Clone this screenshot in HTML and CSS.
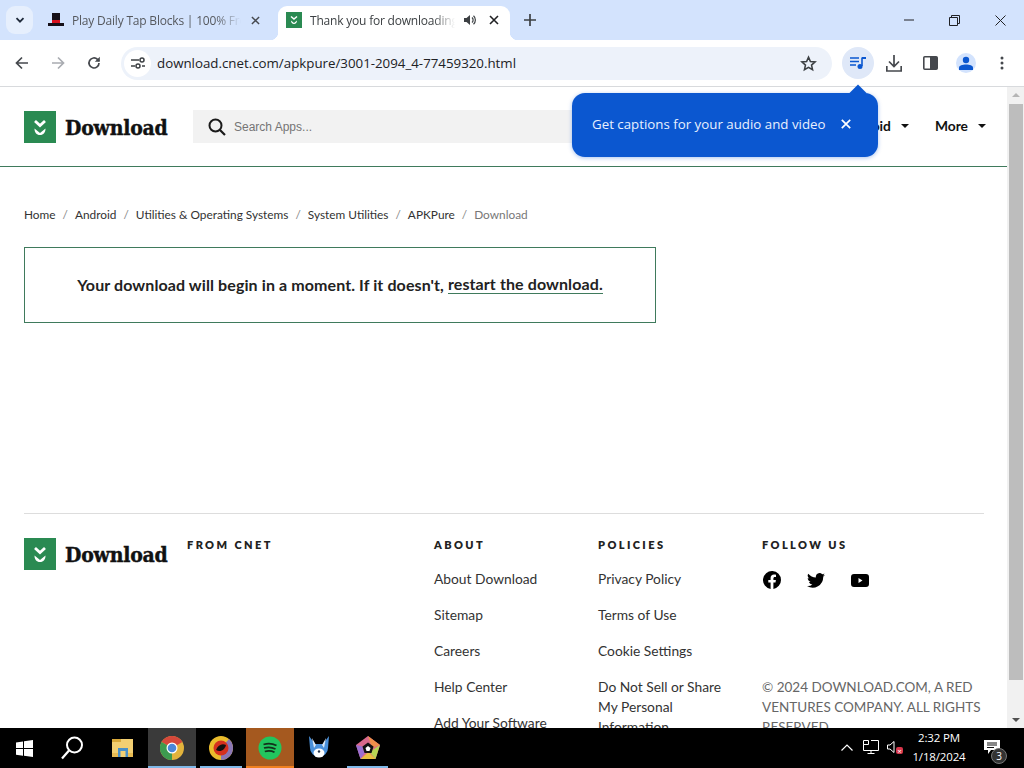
FILE: index.html
```html
<!DOCTYPE html>
<html lang="en">
<head>
<meta charset="utf-8">
<title>Thank you for downloading</title>
<link rel="stylesheet" href="styles.css">
</head>
<body>
<div class="screen">
  <div class="tabstrip">
    <div class="tab-search"><svg width="12" height="12" viewBox="0 0 12 12"><path d="M2.500 4.200 6 7.700l3.500-3.500" fill="none" stroke="#1f2a3a" stroke-width="1.800"/></svg></div>
    <div class="tab">
      <svg class="favicon" width="16" height="16" viewBox="0 0 16 16"><rect x="4" y="1" width="8" height="8" fill="#161018"/><rect x="4" y="8" width="8" height="3" fill="#d8121e"/><rect x="0" y="11" width="16" height="3" fill="#161018"/></svg>
      <span class="tab-title">Play Daily Tap Blocks | 100% Free</span>
      <svg class="tab-close" width="9" height="9" viewBox="0 0 10 10"><path d="M1 1l8 8M9 1l-8 8" stroke="#46494f" stroke-width="1.600"/></svg>
    </div>
    <div class="tab active">
      <svg class="favicon" width="16" height="16" viewBox="0 0 16 16"><rect width="16" height="16" fill="#2a8a52"/><path d="M5 4.500 8 7l3-2.500" fill="none" stroke="#fff" stroke-width="1.500"/><path d="M5 8.500 8 11l3-2.500c0 2-1.200 3.500-3 3.500s-3-1.500-3-3.500z" fill="#fff"/></svg>
      <span class="tab-title">Thank you for downloading</span>
      <svg class="tab-audio" width="14" height="14" viewBox="0 0 14 14"><path d="M1 5h2.500L7 2v10L3.500 9H1z" fill="#3c4043"/><path d="M9 4.500c1.500 1.300 1.500 3.700 0 5M10.500 2.800c2.500 2.200 2.500 6.200 0 8.400" fill="none" stroke="#3c4043" stroke-width="1.200"/></svg>
      <svg class="tab-close" width="10" height="10" viewBox="0 0 10 10"><path d="M1 1l8 8M9 1l-8 8" stroke="#202124" stroke-width="1.600"/></svg>
    </div>
    <svg class="new-tab" width="12" height="12" viewBox="0 0 12 12"><path d="M6 0v12M0 6h12" stroke="#3c4043" stroke-width="1.700"/></svg>
    <div class="window-controls">
      <svg width="10" height="10" viewBox="0 0 10 10"><path d="M0 5h10" stroke="#202124"/></svg>
      <svg width="11" height="11" viewBox="0 0 11 11"><path d="M.5 2.500h8v8h-8zM2.500 2.500v-2h8v8h-2" fill="none" stroke="#202124"/></svg>
      <svg width="11" height="11" viewBox="0 0 11 11"><path d="M.5.5l10 10M10.500.5l-10 10" stroke="#202124"/></svg>
    </div>
  </div>
  <div class="toolbar">
    <svg class="nav" width="14" height="14" viewBox="0 0 14 14"><path d="M13 7H2M7 1.500 1.500 7 7 12.500" fill="none" stroke="#45484d" stroke-width="1.700"/></svg>
    <svg class="nav" width="14" height="14" viewBox="0 0 14 14"><path d="M1 7h11M7 1.500 12.500 7 7 12.500" fill="none" stroke="#a9acb1" stroke-width="1.700"/></svg>
    <svg class="nav" width="14" height="14" viewBox="0 0 14 14"><path d="M12 7a5 5 0 1 1-1.500-3.600L12 5" fill="none" stroke="#45484d" stroke-width="1.700"/><path d="M12.800 .8v5h-5z" fill="#45484d"/></svg>
    <div class="omnibox">
      <div class="site-info"><svg width="14" height="12" viewBox="0 0 14 12"><path d="M0 3h8M0 9h4M11 9h3" stroke="#3c4043" stroke-width="1.600"/><circle cx="11" cy="3" r="2" fill="none" stroke="#3c4043" stroke-width="1.500"/><circle cx="7" cy="9" r="2" fill="none" stroke="#3c4043" stroke-width="1.500"/></svg></div>
      <span class="url">download.cnet.com/apkpure/3001-2094_4-77459320.html</span>
      <svg class="star" width="17" height="17" viewBox="0 0 24 24"><path d="m12 3 2.700 6.100 6.600.7-5 4.400 1.400 6.500L12 17.400l-5.700 3.300 1.400-6.500-5-4.400 6.600-.7z" fill="none" stroke="#3c4043" stroke-width="2.200"/></svg>
    </div>
    <div class="media-btn"><svg width="16" height="14" viewBox="0 0 16 14"><path d="M0 2h9M0 5.500h9M0 9h6" stroke="#0b57d0" stroke-width="1.600"/><path d="M12 1.500V10" stroke="#0b57d0" stroke-width="1.600"/><path d="M12 1h4v2h-4z" fill="#0b57d0"/><circle cx="10" cy="10.500" r="2.500" fill="#0b57d0"/></svg></div>
    <div class="tool-icons">
      <div class="tool"><svg width="16" height="17" viewBox="0 0 16 17"><path d="M8 0v11M3 6.500l5 5 5-5M.8 11v5h14.400v-5" fill="none" stroke="#45484d" stroke-width="1.700"/></svg></div>
      <div class="tool"><svg width="15" height="14" viewBox="0 0 15 14"><rect x=".8" y=".8" width="13.400" height="12.400" rx="1" fill="none" stroke="#45484d" stroke-width="1.600"/><rect x="7" y="1" width="7" height="12" fill="#45484d"/></svg></div>
      <div class="tool"><div class="avatar"><svg width="14" height="14" viewBox="0 0 14 14"><circle cx="7" cy="4" r="3.200" fill="#0b57d0"/><path d="M0 14v-2.500C0 9.500 3.500 8.500 7 8.500s7 1 7 3V14z" fill="#0b57d0"/></svg></div></div>
      <div class="tool"><svg width="4" height="14" viewBox="0 0 4 14"><circle cx="2" cy="2" r="1.500" fill="#45484d"/><circle cx="2" cy="7" r="1.500" fill="#45484d"/><circle cx="2" cy="12" r="1.500" fill="#45484d"/></svg></div>
    </div>
  </div>
  <div class="viewport">
    <div class="page">
      <header class="site-header">
        <a class="logo">
          <svg class="logo-mark" width="32" height="32" viewBox="0 0 32 32"><rect width="32" height="32" fill="#2a8a52"/><path d="m11 10 5 4.500 5-4.500" fill="none" stroke="#fff" stroke-width="2.800"/><path d="M10.500 17.500 16 22l5.500-4.500c0 4-2 6.500-5.500 6.500s-5.500-2.500-5.500-6.500z" fill="#fff"/></svg>
          <span class="logo-text">Download</span>
        </a>
        <div class="search">
          <svg width="18" height="18" viewBox="0 0 18 18"><circle cx="7.500" cy="7.500" r="6" fill="none" stroke="#1a1a1a" stroke-width="2"/><path d="m12 12 5 5" stroke="#1a1a1a" stroke-width="2.200"/></svg>
          <span class="search-text">Search Apps...</span>
        </div>
        <nav class="site-nav">
          <span class="nav-item">Android<i class="caret"></i></span>
          <span class="nav-item">More<i class="caret"></i></span>
        </nav>
      </header>
      <ol class="crumbs">
        <li>Home</li><li class="sep">/</li><li>Android</li><li class="sep">/</li><li>Utilities &amp; Operating Systems</li><li class="sep">/</li><li>System Utilities</li><li class="sep">/</li><li>APKPure</li><li class="sep">/</li><li class="current">Download</li>
      </ol>
      <div class="notice">Your download will begin in a moment. If it doesn't,&nbsp;<a class="restart">restart the download.</a></div>
      <footer class="site-footer">
        <a class="logo">
          <svg class="logo-mark" width="32" height="32" viewBox="0 0 32 32"><rect width="32" height="32" fill="#2a8a52"/><path d="m11 10 5 4.500 5-4.500" fill="none" stroke="#fff" stroke-width="2.800"/><path d="M10.500 17.500 16 22l5.500-4.500c0 4-2 6.500-5.500 6.500s-5.500-2.500-5.500-6.500z" fill="#fff"/></svg>
          <span class="logo-text">Download</span>
        </a>
        <div class="foot-col"><h4>FROM CNET</h4></div>
        <div class="foot-col">
          <h4>ABOUT</h4>
          <a>About Download</a><a>Sitemap</a><a>Careers</a><a>Help Center</a><a>Add Your Software</a>
        </div>
        <div class="foot-col">
          <h4>POLICIES</h4>
          <a>Privacy Policy</a><a>Terms of Use</a><a>Cookie Settings</a><a class="multi">Do Not Sell or Share My Personal Information</a>
        </div>
        <div class="foot-col">
          <h4>FOLLOW US</h4>
          <div class="social">
            <svg width="18" height="18" viewBox="0 0 18 18"><path d="M18 9a9 9 0 1 0-10.400 8.900v-6.300H5.300V9h2.300V7c0-2.300 1.300-3.500 3.400-3.500 1 0 2 .2 2 .2v2.200h-1.100c-1.100 0-1.500.7-1.500 1.400V9h2.500l-.4 2.600h-2.100v6.300A9 9 0 0 0 18 9z" fill="#000"/></svg>
            <svg width="18" height="15" viewBox="0 0 18 15"><path d="M18 1.800c-.7.300-1.400.5-2.100.6.800-.5 1.300-1.200 1.600-2-.7.400-1.500.7-2.300.9A3.700 3.700 0 0 0 8.900 4.600 10.500 10.500 0 0 1 1.300.7a3.700 3.700 0 0 0 1.100 4.900c-.6 0-1.200-.2-1.700-.5 0 1.800 1.300 3.300 3 3.700-.5.100-1.100.2-1.700.1.500 1.500 1.800 2.500 3.400 2.600A7.400 7.400 0 0 1 0 13a10.500 10.500 0 0 0 16.200-9.300c.7-.5 1.300-1.200 1.800-1.900z" fill="#000"/></svg>
            <svg width="18" height="13" viewBox="0 0 18 13"><path fill-rule="evenodd" d="M3 0h12a3 3 0 0 1 3 3v7a3 3 0 0 1-3 3H3a3 3 0 0 1-3-3V3a3 3 0 0 1 3-3zm4.500 4v5l4-2.500z" fill="#000"/></svg>
          </div>
          <p class="copyright">© 2024 DOWNLOAD.COM, A RED VENTURES COMPANY. ALL RIGHTS RESERVED.</p>
        </div>
      </footer>
    </div>
    <div class="scrollbar">
      <i class="arrow-up"></i>
      <div class="thumb"></div>
      <i class="arrow-down"></i>
    </div>
    <div class="captions-tip">
      <i class="tip-arrow"></i>
      <span>Get captions for your audio and video</span>
      <svg width="10" height="10" viewBox="0 0 10 10"><path d="M.8.8l8.400 8.400M9.200.8.800 9.200" stroke="#fff" stroke-width="1.700"/></svg>
    </div>
  </div>
  <div class="taskbar">
    <div class="task-list">
      <div class="task-btn"><svg width="17" height="17" viewBox="0 0 17 17"><path d="M0 2.400 7 1.400v6.700H0zM8 1.300 17 0v8.100H8zM0 9h7v6.700l-7-1zM8 9h9v8l-9-1.300z" fill="#fff"/></svg></div>
      <div class="task-btn"><svg width="22" height="24" viewBox="0 0 22 24"><circle cx="13.500" cy="9" r="7.500" fill="none" stroke="#fff" stroke-width="2"/><path d="M8 14.500 1 22.500" stroke="#fff" stroke-width="2.200"/></svg></div>
      <div class="task-btn"><svg width="21" height="18" viewBox="0 0 21 18"><rect width="21" height="18" fill="#f3cf72"/><rect width="9" height="3" fill="#d9a93a"/><rect y="14" width="21" height="4" fill="#e8bb52"/><rect x="6" y="9" width="10" height="9" fill="#4a90c8"/><rect x="8.500" y="12" width="5" height="6" fill="#f3cf72"/></svg></div>
      <div class="task-btn running wide chrome-task"><svg width="24" height="24" viewBox="0 0 24 24"><circle cx="12" cy="12" r="12" fill="#e2b33c"/><path d="M12 12 1.600 6A12 12 0 0 1 22.400 6z" fill="#d5483b"/><path d="M12 12 1.600 6A12 12 0 0 0 12 24z" fill="#3d9a4f"/><circle cx="12" cy="12" r="5.500" fill="#fff"/><circle cx="12" cy="12" r="4.300" fill="#4a87d9"/></svg></div>
      <div class="task-btn running"><svg width="24" height="24" viewBox="0 0 24 24"><circle cx="12" cy="12" r="12" fill="#eabc2c"/><path d="M12 24A12 12 0 0 0 24 12 12 12 0 0 0 20 3L12 12z" fill="#8a76b5"/><circle cx="12" cy="12" r="7.500" fill="#d5301f"/><path d="M7 14c2-5 6-7 10-5-1 4-5 8-10 5z" fill="#111"/></svg></div>
      <div class="task-btn running wide spotify"><svg width="24" height="24" viewBox="0 0 24 24"><circle cx="12" cy="12" r="11.500" fill="#22c55e"/><path d="M5.500 8.500c4-1.200 9-1 13 1M6 12c3.500-1 8-.8 11.500 1M6.800 15.500c3-.8 7-.6 9.700.8" fill="none" stroke="#12301c" stroke-width="1.800"/></svg></div>
      <div class="task-btn"><svg width="26" height="26" viewBox="0 0 26 26"><path d="M3 1l6 8h8l6-8-1 12a9 9 0 0 1-18 0z" fill="#4a90d9"/><path d="M6 3l4 7-2 3zM20 3l-4 7 2 3z" fill="#dce9f5"/><ellipse cx="13" cy="18" rx="5.500" ry="4.500" fill="#fff"/><circle cx="13" cy="16.500" r="1.200" fill="#22324a"/></svg></div>
      <div class="task-btn running"><svg width="24" height="24" viewBox="0 0 24 24"><path d="M12 0 24 9l-4.500 14h-15L0 9z" fill="#d9698c"/><path d="M12 0 24 9l-8 3z" fill="#ef8f4a"/><path d="M24 9l-4.500 14-6-7z" fill="#b7d553"/><path d="M4.500 23h15l-7-7z" fill="#e8c040"/><path d="M0 9l4.500 14 4-6-2-6.500z" fill="#9a6fd0"/><path d="M12 6.500 17.500 10.500l-2 6.500h-7l-2-6.500z" fill="#111"/><path d="M12 10l2.500 2-1 3h-3l-1-3z" fill="#fff"/></svg></div>
    </div>
    <div class="tray">
      <svg class="tray-chevron" width="12" height="7" viewBox="0 0 12 7"><path d="M.5 6.500 6 1l5.500 5.500" fill="none" stroke="#fff" stroke-width="1.200"/></svg>
      <svg class="tray-net" width="16" height="14" viewBox="0 0 16 14"><path d="M.5.500h5v4h-5zM3 4.500H.5v6h15v-10H8M8 10.500v3M4.500 13.500h7" fill="none" stroke="#fff"/></svg>
      <span class="volume"><svg width="8" height="12" viewBox="0 0 8 12"><path d="M.5 4h2.500l4-3.500v11L3 8H.5z" fill="none" stroke="#fff"/></svg><i class="muted">×</i></span>
      <div class="clock"><span>2:32 PM</span><span>1/18/2024</span></div>
      <div class="notify"><svg width="16" height="14" viewBox="0 0 16 14"><path d="M0 0h16v10H7l-3 4v-4H0z" fill="#fff"/><path d="M3 3h10M3 5h10M3 7.500h7" stroke="#111"/></svg><i class="badge">3</i></div>
    </div>
  </div>
</div>
</body>
</html>
```
FILE: styles.css
```css
* { box-sizing: border-box; }
html, body { margin: 0; padding: 0; height: 100%; overflow: hidden; }
body { font-family: "Open Sans", "Liberation Sans", sans-serif; color: #111; }
a { color: inherit; text-decoration: none; }
svg { display: block; flex: none; }

.screen { width: 1024px; height: 768px; display: flex; flex-direction: column; overflow: hidden; background: #fff; }

/* Tab strip */
.tabstrip { height: 40px; flex: none; background: #d3e3fd; display: flex; align-items: flex-end; padding-left: 6px; }
.tab-search { width: 27px; height: 28px; margin-bottom: 6px; border-radius: 9px; background: #e6effd; display: flex; align-items: center; justify-content: center; }
.tab { width: 245px; height: 34px; padding: 0 18px 6px 15px; display: flex; align-items: center; font-size: 12px; letter-spacing: -.2px; color: #55585d; }
.tab .favicon { margin-right: 8px; }
.tab-title { flex: 1; min-width: 0; white-space: nowrap; overflow: hidden; -webkit-mask-image: linear-gradient(90deg, #000 85%, transparent); mask-image: linear-gradient(90deg, #000 85%, transparent); }
.tab-close { margin-left: 10px; }
.tab-audio { margin-left: 8px; }
.tab.active { width: 232px; position: relative; background: #fff; border-radius: 9px 9px 0 0; color: #3c4043; padding: 0 11px 6px 8px; }
.tab.active .tab-close { margin-left: 12px; }
.tab.active::before, .tab.active::after { content: ""; position: absolute; bottom: 0; width: 8px; height: 8px; }
.tab.active::before { left: -8px; background: radial-gradient(circle at 0 0, transparent 8px, #fff 8.500px); }
.tab.active::after { right: -8px; background: radial-gradient(circle at 100% 0, transparent 8px, #fff 8.500px); }
.new-tab { margin: 0 0 14px 14px; }
.window-controls { margin-left: auto; display: flex; gap: 35px; align-items: center; align-self: stretch; padding-right: 18px; }

/* Toolbar */
.toolbar { height: 47px; flex: none; background: #fff; border-bottom: 1px solid #d8dadd; border-radius: 8px 8px 0 0; display: flex; align-items: center; padding-left: 15px; }
.toolbar .nav { margin-right: 22px; }
.omnibox { width: 711px; height: 33px; margin-left: -2px; border-radius: 17px; background: #edf2fa; display: flex; align-items: center; padding-right: 15px; }
.site-info { width: 27px; height: 27px; margin-left: 3px; border-radius: 50%; background: #fff; display: flex; align-items: center; justify-content: center; }
.url { margin-left: 6px; font-size: 13.300px; color: #202124; flex: 1; }
.media-btn { width: 32px; height: 32px; margin-left: 10px; border-radius: 50%; background: #dfe8f8; display: flex; align-items: center; justify-content: center; }
.tool-icons { display: flex; align-items: center; margin-left: 2px; }
.tool { width: 36px; display: flex; justify-content: center; align-items: center; }
.avatar { width: 20px; height: 20px; border-radius: 50%; background: #d3e3fd; display: flex; align-items: center; justify-content: center; }

/* Content viewport */
.viewport { flex: 1; min-height: 0; display: flex; position: relative; }
.page { flex: 1; min-width: 0; overflow: hidden; }
.site-header { height: 80px; border-bottom: 1px solid #3f7a5c; display: flex; align-items: center; padding: 0 21px 0 24px; }
.logo { display: flex; align-items: center; gap: 9px; flex: none; }
.logo-text { width: 103px; padding-top: 1px; font-family: "DejaVu Serif", "Liberation Serif", serif; font-weight: 700; font-stretch: condensed; font-size: 21px; letter-spacing: -.2px; -webkit-text-stroke: .4px #111; color: #111; white-space: nowrap; }
.search { width: 500px; height: 33px; margin-left: 25px; padding-left: 15px; background: #f2f2f2; display: flex; align-items: center; gap: 8px; }
.search-text { padding-top: 1px; font-family: "Liberation Sans", sans-serif; font-size: 12px; color: #757575; }
.site-nav { margin-left: auto; padding-bottom: 2px; display: flex; gap: 26px; font-family: Lato, sans-serif; font-weight: 700; font-size: 13.800px; color: #111; }
.nav-item { display: flex; align-items: center; gap: 10px; }
.caret { width: 0; height: 0; border: 4px solid transparent; border-top-color: #111; border-bottom: 0; }

.crumbs { list-style: none; margin: 40px 0 0; padding: 0 0 0 24px; display: flex; gap: 7px; font-family: Lato, sans-serif; font-size: 11.850px; line-height: 16px; color: #333; }
.crumbs .sep { color: #888; }
.crumbs .current { color: #777; }

.notice { width: 632px; height: 76px; margin: 24px 0 0 24px; padding-bottom: 2px; border: 1px solid #3f7a5c; display: flex; align-items: center; justify-content: center; font-family: Lato, sans-serif; font-weight: 700; font-size: 16px; letter-spacing: .1px; color: #222; }
.restart { border-bottom: 1px solid #3f7a5c; }

.site-footer { margin: 190px 23px 0 24px; padding-top: 24px; border-top: 1px solid #ddd; display: grid; grid-template-columns: 163px 247px 164px 164px 1fr; align-items: start; }
.foot-col h4 { margin: 0 0 17px; font-family: Lato, sans-serif; font-weight: 800; font-size: 11px; line-height: 14px; letter-spacing: 2.400px; color: #222; }
.foot-col a { display: block; font-family: Lato, sans-serif; font-size: 13.800px; line-height: 20px; color: #333; margin-bottom: 16px; }
.foot-col .multi { width: 130px; }
.social { display: flex; align-items: center; gap: 26px; height: 20px; margin-top: 18px; padding-left: 1px; }
.copyright { width: 235px; margin: 87px 0 0; font-family: Lato, sans-serif; font-size: 13.500px; line-height: 20px; color: #666; }

/* Scrollbar */
.scrollbar { width: 17px; flex: none; background: #f1f1f1; display: flex; flex-direction: column; align-items: center; }
.arrow-up { margin-top: 6px; width: 0; height: 0; border: 4px solid transparent; border-bottom-color: #b5b5b5; border-top: 0; }
.thumb { width: 14px; height: 576px; margin-top: 7px; align-self: flex-start; margin-left: 2px; background: #bdbdbd; }
.arrow-down { margin-top: auto; margin-bottom: 6px; width: 0; height: 0; border: 4px solid transparent; border-top-color: #505050; border-bottom: 0; }

/* Captions bubble */
.captions-tip { position: absolute; left: 572px; top: 6px; width: 306px; height: 64px; padding: 0 0 2px 20px; background: #0b57d0; border-radius: 13px; display: flex; align-items: center; gap: 15px; font-size: 13.300px; color: #e8f0fe; box-shadow: 0 1px 4px rgba(11,87,208,.35); }
.tip-arrow { position: absolute; left: 280px; top: -6px; width: 12px; height: 12px; background: #0b57d0; transform: rotate(45deg); }

/* Taskbar */
.taskbar { height: 40px; flex: none; background: #000; display: flex; align-items: stretch; }
.task-list { display: grid; grid-template-columns: 48px 48px 52px 48px 50px 48px 49px 49px; }
.task-btn { position: relative; display: flex; align-items: center; justify-content: center; }
.task-btn.running::after { content: ""; position: absolute; left: 4px; right: 4px; bottom: 0; height: 2px; background: #7fb8e8; }
.task-btn.wide::after { left: 0; right: 0; }
.chrome-task { background: #3a3a3a; }
.spotify { background: #a5591f; }
.task-btn.spotify::after { background: #f07f1f; }
.tray { margin-left: auto; display: flex; align-items: center; padding: 0 16px 2px 0; }
.tray-chevron { margin-right: 10px; }
.tray-net { margin-right: 8px; }
.volume { position: relative; width: 16px; }
.muted { position: absolute; left: 9px; top: 6px; width: 7px; height: 7px; border-radius: 2px; background: #d8354a; color: #fff; font-style: normal; font-size: 8px; line-height: 7px; text-align: center; }
.clock { width: 72px; display: flex; flex-direction: column; align-items: center; font-size: 11.500px; letter-spacing: -.15px; line-height: 19px; color: #fff; }
.notify { position: relative; width: 24px; margin-left: 9px; }
.badge { position: absolute; left: 7px; top: 8px; width: 16px; height: 16px; border-radius: 50%; background: #333; border: 1px solid #777; color: #fff; font-style: normal; font-size: 10px; line-height: 14px; text-align: center; }
```
